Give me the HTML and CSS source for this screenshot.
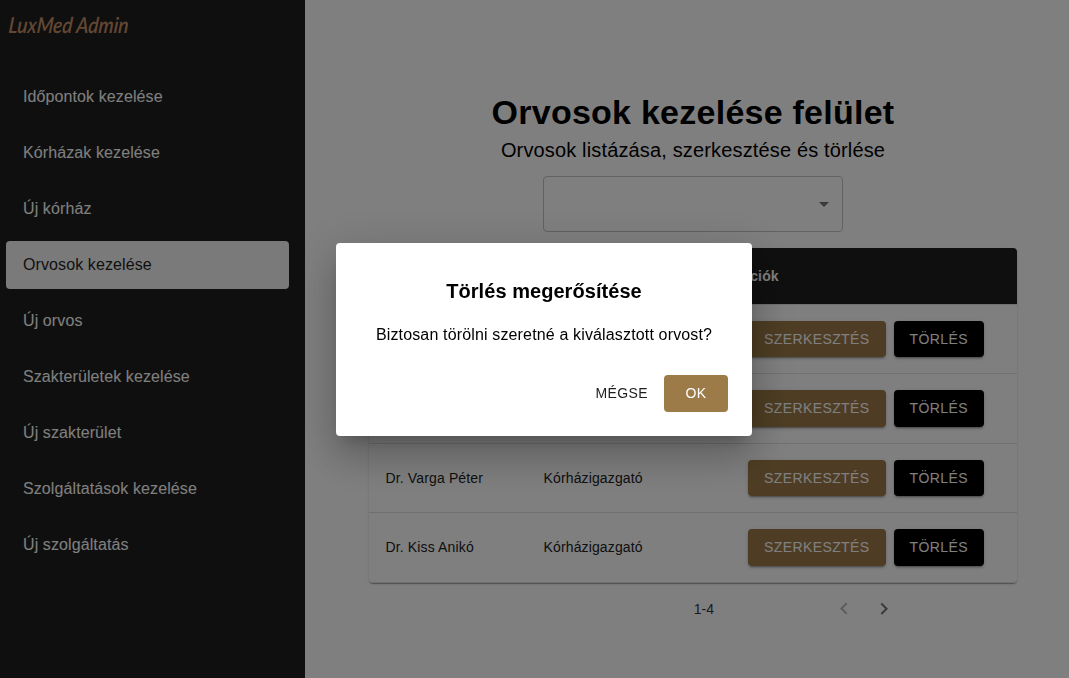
FILE: index.html
```html
<!DOCTYPE html>
<html lang="hu">
<head>
<meta charset="utf-8">
<title>LuxMed Admin</title>
<link rel="stylesheet" href="styles.css">
</head>
<body>
<div class="app">
  <aside class="sidebar">
    <div class="logo"><span class="logo-text">LuxMed Admin</span></div>
    <nav class="nav">
      <a class="nav-item">Időpontok kezelése</a>
      <a class="nav-item">Kórházak kezelése</a>
      <a class="nav-item">Új kórház</a>
      <a class="nav-item active">Orvosok kezelése</a>
      <a class="nav-item">Új orvos</a>
      <a class="nav-item">Szakterületek kezelése</a>
      <a class="nav-item">Új szakterület</a>
      <a class="nav-item">Szolgáltatások kezelése</a>
      <a class="nav-item">Új szolgáltatás</a>
    </nav>
  </aside>
  <main class="content">
    <h1 class="title">Orvosok kezelése felület</h1>
    <p class="subtitle">Orvosok listázása, szerkesztése és törlése</p>
    <div class="select"><svg class="icon" viewBox="0 0 24 24"><path d="M7 10l5 5 5-5z"/></svg></div>
    <section class="table">
      <div class="row head"><span></span><span></span><span class="head-label">Akciók</span></div>
      <div class="row"><span></span><span></span><div class="actions"><button class="btn gold">Szerkesztés</button><button class="btn black">Törlés</button></div></div>
      <div class="row"><span></span><span></span><div class="actions"><button class="btn gold">Szerkesztés</button><button class="btn black">Törlés</button></div></div>
      <div class="row"><span>Dr. Varga Péter</span><span>Kórházigazgató</span><div class="actions"><button class="btn gold">Szerkesztés</button><button class="btn black">Törlés</button></div></div>
      <div class="row"><span>Dr. Kiss Anikó</span><span>Kórházigazgató</span><div class="actions"><button class="btn gold">Szerkesztés</button><button class="btn black">Törlés</button></div></div>
    </section>
    <div class="pagination">
      <span class="range">1-4</span>
      <span class="page-btn disabled"><svg class="icon" viewBox="0 0 24 24"><path d="M15.41 16.09l-4.58-4.59 4.58-4.59L14 5.5l-6 6 6 6z"/></svg></span>
      <span class="page-btn"><svg class="icon" viewBox="0 0 24 24"><path d="M8.59 16.34l4.58-4.59-4.58-4.59L10 5.75l6 6-6 6z"/></svg></span>
    </div>
  </main>
</div>
<div class="backdrop">
  <div class="dialog" role="dialog">
    <h2 class="dialog-title">Törlés megerősítése</h2>
    <p class="dialog-text">Biztosan törölni szeretné a kiválasztott orvost?</p>
    <div class="dialog-actions"><button class="btn text">Mégse</button><button class="btn gold flat">OK</button></div>
  </div>
</div>
</body>
</html>
```
FILE: styles.css
```css
* { box-sizing: border-box; }
body { margin: 0; height: 678px; overflow: hidden; background: #fff; font-family: "Liberation Sans", Arial, sans-serif; color: #000; }
h1, h2, p { margin: 0; }
.app { display: flex; height: 678px; }
.sidebar { width: 305px; flex: none; background: #1f1f1f; }
.logo { height: 73px; padding: 10px 0 0 8px; }
.logo-text { display: inline-block; font: italic 600 22px/30px Lato, sans-serif; color: #c58e66; white-space: nowrap; transform: scaleX(.87) skewX(-6deg); transform-origin: 0 80%; }
.nav { display: flex; flex-direction: column; gap: 8px; padding: 0 16px 0 6px; }
.nav-item { height: 48px; padding-left: 17px; line-height: 47px; font-size: 16px; letter-spacing: .1px; color: #fff; border-radius: 4px; }
.nav-item.active { background: #f5f5f5; color: #1f1f1f; }
.content { flex: 1; display: flex; flex-direction: column; align-items: center; padding: 90px 0 0 12px; }
.title { font-size: 34px; line-height: 44px; font-weight: 700; letter-spacing: .25px; white-space: nowrap; }
.subtitle { font-size: 20px; line-height: 32px; letter-spacing: .15px; white-space: nowrap; }
.select { width: 300px; height: 56px; margin: 10px 0 16px; padding-right: 6px; border: 1px solid #c4c4c4; border-radius: 4px; display: flex; align-items: center; justify-content: flex-end; }
.icon { width: 24px; height: 24px; display: block; fill: #757575; }
.table { width: 648px; border-radius: 4px; box-shadow: 0 2px 1px -1px rgba(0,0,0,.2), 0 1px 1px rgba(0,0,0,.14), 0 1px 3px rgba(0,0,0,.12); }
.row { display: grid; grid-template-columns: 158px 188.5px 1fr; align-items: center; height: 69.5px; padding-left: 16.5px; border-bottom: 1px solid #e0e0e0; font-size: 14px; letter-spacing: .14px; color: #212121; }
.row:last-child { border-radius: 0 0 4px 4px; }
.row.head { height: 56.5px; background: #1f1f1f; background-clip: padding-box; color: #fff; font-weight: 700; border-radius: 4px 4px 0 0; }
.actions { display: flex; gap: 8px; padding-left: 16px; }
.btn { height: 36.5px; padding: 6px 16px; border: 0; border-radius: 4px; font: 500 14px/24.5px "Liberation Sans", Arial, sans-serif; letter-spacing: .4px; text-transform: uppercase; color: #fff; white-space: nowrap; box-shadow: 0 3px 1px -2px rgba(0,0,0,.2), 0 2px 2px rgba(0,0,0,.14), 0 1px 5px rgba(0,0,0,.12); }
.gold { background: #9c7b48; }
.black { background: #000; }
.pagination { width: 648px; height: 53px; display: flex; align-items: center; justify-content: flex-end; padding-right: 113px; }
.range { margin-right: 110px; font-size: 14px; color: #303840; }
.page-btn { width: 40px; padding: 8px; }
.disabled { opacity: .5; }
.backdrop { position: fixed; inset: 0; background: rgba(0,0,0,.5); }
.dialog { position: absolute; left: 336px; top: 243px; width: 416px; height: 193px; padding: 32px 24px 24px; background: #fff; border-radius: 4px; box-shadow: 0 11px 15px -7px rgba(0,0,0,.2), 0 24px 38px 3px rgba(0,0,0,.14), 0 9px 46px 8px rgba(0,0,0,.12); text-align: center; }
.dialog-title { font-size: 20px; line-height: 32px; letter-spacing: .05px; }
.dialog-text { margin-top: 16px; font-size: 16px; line-height: 24px; letter-spacing: .15px; white-space: nowrap; }
.dialog-actions { display: flex; justify-content: flex-end; gap: 8px; margin-top: 28px; }
.text { padding: 6px 8px; background: none; color: #1f1f1f; box-shadow: none; }
.flat { width: 64px; box-shadow: none; }
```
